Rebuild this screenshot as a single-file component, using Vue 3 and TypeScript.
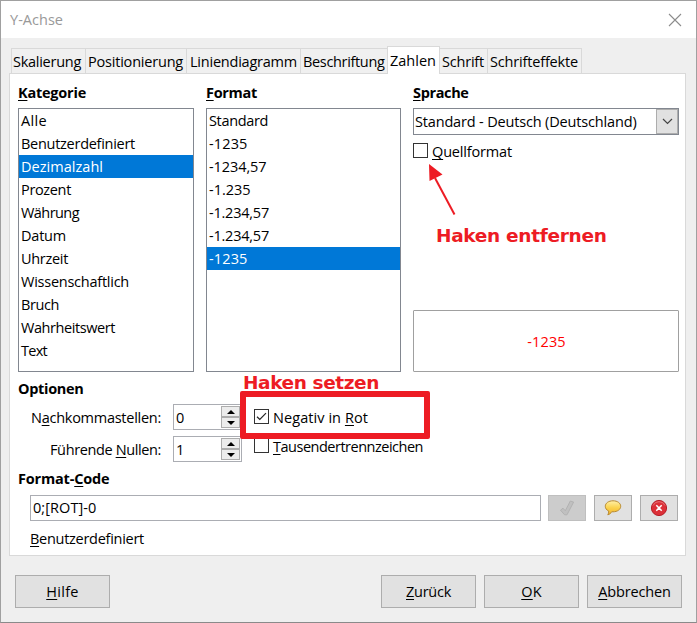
<script setup lang="ts">
import { defineComponent, h, onMounted, ref } from 'vue'

/* Text label: "~" marks the mnemonic letter, w is the label's width in pixels */
const Lbl = defineComponent({
  props: { t: { type: String, required: true }, w: { type: Number, required: true } },
  setup(props) {
    const el = ref<HTMLElement | null>(null)
    const spacing = ref(0)
    onMounted(() => {
      if (!el.value) return
      const natural = el.value.getBoundingClientRect().width
      spacing.value = (props.w - natural) / props.t.replace('~', '').length
    })
    return () => {
      const i = props.t.indexOf('~')
      const parts = i < 0
        ? [props.t]
        : [props.t.slice(0, i), h('u', props.t[i + 1]), props.t.slice(i + 2)]
      return h('span', { ref: el, class: 'lbl', style: { letterSpacing: spacing.value + 'px' } }, parts)
    }
  },
})

interface Item { t: string; w: number }

const tabs = [
  { t: 'Skalierung', w: 68, cls: 't1' },
  { t: 'Positionierung', w: 95, cls: 't2' },
  { t: 'Liniendiagramm', w: 107, cls: 't3' },
  { t: 'Beschriftung', w: 81.5, cls: 't4' },
  { t: 'Zahlen', w: 46, cls: 't5 active' },
  { t: 'Schrift', w: 42, cls: 't6' },
  { t: 'Schrifteffekte', w: 88, cls: 't7' },
]
const categories: Item[] = [
  { t: 'Alle', w: 26 }, { t: 'Benutzerdefiniert', w: 114 }, { t: 'Dezimalzahl', w: 82 },
  { t: 'Prozent', w: 50 }, { t: 'Währung', w: 58 }, { t: 'Datum', w: 45 }, { t: 'Uhrzeit', w: 47 },
  { t: 'Wissenschaftlich', w: 108 }, { t: 'Bruch', w: 38 }, { t: 'Wahrheitswert', w: 94 }, { t: 'Text', w: 26 },
]
const formats: Item[] = [
  { t: 'Standard', w: 59 }, { t: '-1235', w: 38.5 }, { t: '-1234,57', w: 57.5 }, { t: '-1.235', w: 41.5 },
  { t: '-1.234,57', w: 60 }, { t: '-1.234,57', w: 60 }, { t: '-1235', w: 38.5 },
]
const category = ref(2)
const format = ref(6)
const spins = [
  { t: 'N~achkommastellen:', w: 130, v: '0' },
  { t: 'Führende ~Nullen:', w: 111, v: '1' },
]
</script>

<template>
  <div class="window">
    <header class="titlebar">
      <Lbl t="Y-Achse" :w="53" />
      <svg class="close" width="14" height="14" viewBox="0 0 14 14"><path d="M1 1L13 13M13 1L1 13" /></svg>
    </header>

    <nav class="tabs">
      <div v-for="tab in tabs" :key="tab.t" class="tab" :class="tab.cls"><Lbl :t="tab.t" :w="tab.w" /></div>
    </nav>

    <main class="pane">
      <section class="columns">
        <div class="col">
          <h2><Lbl t="~Kategorie" :w="68" /></h2>
          <ul class="list">
            <li v-for="(c, i) in categories" :key="i" :class="{ sel: i === category }" @click="category = i"><Lbl :t="c.t" :w="c.w" /></li>
          </ul>
        </div>
        <div class="col">
          <h2><Lbl t="~Format" :w="51" /></h2>
          <ul class="list">
            <li v-for="(f, i) in formats" :key="i" :class="{ sel: i === format }" @click="format = i"><Lbl :t="f.t" :w="f.w" /></li>
          </ul>
        </div>
        <div class="col">
          <h2><Lbl t="~Sprache" :w="55.5" /></h2>
          <div class="combo">
            <Lbl t="Standard - Deutsch (Deutschland)" :w="221.5" />
            <span class="drop"><svg width="11" height="7" viewBox="0 0 11 7"><path d="M1 1L5.5 5.5L10 1" /></svg></span>
          </div>
          <div class="check source"><i class="box"></i><Lbl class="cap" t="~Quellformat" :w="80" /></div>
          <div class="preview"><Lbl t="-1235" :w="38.5" /></div>
        </div>
      </section>

      <h2 class="opt"><Lbl t="Optionen" :w="65.5" /></h2>
      <section class="options">
        <div class="spins">
          <div v-for="s in spins" :key="s.t" class="spinrow">
            <Lbl class="cap" :t="s.t" :w="s.w" />
            <div class="spin">
              <span class="cap">{{ s.v }}</span>
              <div class="arrows">
                <b><svg width="8" height="4" viewBox="0 0 8 4"><path d="M0 4L4 0L8 4Z" /></svg></b>
                <b><svg width="8" height="4" viewBox="0 0 8 4"><path d="M0 0L4 4L8 0Z" /></svg></b>
              </div>
            </div>
          </div>
        </div>
        <div class="checks">
          <div class="check">
            <i class="box"><svg width="13" height="13" viewBox="0 0 13 13"><path d="M2 6.8L4.8 9.5L11 3.2" /></svg></i>
            <Lbl class="cap" t="Negativ in ~Rot" :w="95" />
          </div>
          <div class="check"><i class="box"></i><Lbl class="cap" t="~Tausendertrennzeichen" :w="150" /></div>
        </div>
      </section>

      <h2 class="code"><Lbl t="Format-~Code" :w="91.5" /></h2>
      <section class="coderow">
        <div class="field"><Lbl t="0;[ROT]-0" :w="63.5" /></div>
        <div class="tool off">
          <svg width="18" height="18" viewBox="0 0 18 18"><path d="M2.5 11.2L5 9.2L7.3 11.8L12.3 2L15.6 3.1L9 15.8H6.6Z" fill="#c0c0c0" stroke="#b2b2b2" stroke-linejoin="round" /></svg>
        </div>
        <div class="tool">
          <svg width="18" height="18" viewBox="0 0 18 18">
            <defs><linearGradient id="bubble" x1="0" y1="0" x2="0" y2="1"><stop offset="0" stop-color="#fff0a8" /><stop offset=".5" stop-color="#fbd24d" /><stop offset="1" stop-color="#f2b32b" /></linearGradient></defs>
            <path d="M9 1.8C13.5 1.8 16.7 4.2 16.7 7.3S13.5 12.8 9 12.8L7.8 12.7C6.8 14.3 5.4 15.4 3.8 15.8C4.5 14.8 4.8 13.5 4.7 12C2.5 11 1.3 9.3 1.3 7.3C1.3 4.2 4.5 1.8 9 1.8Z" fill="url(#bubble)" stroke="#b88a32" />
          </svg>
        </div>
        <div class="tool">
          <svg width="18" height="18" viewBox="0 0 18 18">
            <circle cx="9" cy="9" r="7.6" fill="#dc3038" stroke="#b51e28" />
            <path d="M3 6.5A6.6 6.6 0 0 1 15 6.5" fill="none" stroke="#ec7d80" stroke-width=".8" />
            <path d="M6.3 6.3L11.7 11.7M11.7 6.3L6.3 11.7" stroke="#fff" stroke-width="1.5" />
          </svg>
        </div>
      </section>
      <div class="custom"><Lbl t="~Benutzerdefiniert" :w="114" /></div>
    </main>

    <footer class="footer">
      <button class="help"><Lbl t="~Hilfe" :w="32.5" /></button>
      <button><Lbl t="~Zurück" :w="45" /></button>
      <button><Lbl t="~OK" :w="20.5" /></button>
      <button><Lbl t="~Abbrechen" :w="72.5" /></button>
    </footer>

    <i class="edge"></i>
    <div class="note remove"><Lbl t="Haken entfernen" :w="170.5" /></div>
    <div class="note set"><Lbl t="Haken setzen" :w="136" /></div>
    <div class="frame"></div>
    <svg class="pointer" width="32" height="56" viewBox="0 0 32 56">
      <path d="M10 15L29.5 51.5" stroke="#ed1c24" stroke-width="2" />
      <path d="M4 1L17.5 11.5L4.5 18Z" fill="#ed1c24" />
    </svg>
  </div>
</template>

<style>
body { margin: 0; background: #efefef; }
.lbl { display: inline-block; white-space: pre; flex: none; }
.lbl u { text-decoration: underline; text-decoration-thickness: 1px; text-underline-offset: 2px; text-decoration-skip-ink: none; }
</style>

<style scoped>
* { box-sizing: border-box; }
.window {
  position: relative; width: 697px; height: 623px; overflow: hidden;
  display: flex; flex-direction: column; background: #efefef;
  border: 1px solid #a0a0a0; border-bottom-color: #8a8a8a;
  font: 14.5px/20px "Open Sans", "Noto Sans", sans-serif; color: #000;
}
.titlebar { height: 37px; flex: none; background: #fff; color: #999; display: flex; align-items: center; justify-content: space-between; padding: 0 14px 0 9px; }
.close { stroke: #8c8c8c; stroke-width: 1.1; fill: none; }
.tabs { height: 35px; flex: none; display: flex; align-items: flex-end; padding-left: 10px; }
.tab { height: 25px; border: 1px solid #d9d9d9; border-width: 1px 0 0 1px; padding: 3px 0 0 2px; background: #f0f0f0; }
.t1 { width: 74px; padding-left: 1px; }
.t2 { width: 101px; }
.t3 { width: 114px; padding-left: 3px; }
.t4 { width: 87px; }
.active { width: 53px; height: 28px; margin-bottom: -1px; background: #fff; border-right-width: 1px; padding: 4px 0 0 2px; position: relative; z-index: 1; }
.t6 { width: 47px; border-left: 0; }
.t7 { width: 95px; border-right-width: 1px; }
.pane { width: 677px; height: 483px; flex: none; margin-left: 8px; background: #fff; border: 1px solid #d9d9d9; padding: 9px 0 0 8px; }
h2 { margin: 0; font-size: 14.5px; line-height: 20px; height: 20px; font-weight: 700; }
.columns { display: grid; grid-template-columns: 176px 195px 266px; column-gap: 12px; }
.col { height: 289px; display: flex; flex-direction: column; }
.list { list-style: none; margin: 5px 0 0; padding: 0; height: 264px; border: 1px solid #828790; }
.list li { height: 23px; line-height: 23px; padding-left: 2px; }
.list .sel { background: #0078d7; color: #fff; }
.combo { margin-top: 5px; height: 27px; flex: none; border: 1px solid #828790; display: flex; justify-content: space-between; align-items: center; padding-left: 1px; }
.drop { width: 22px; height: 25px; background: #e1e1e1; border: 1px solid #adadad; display: grid; place-items: center; }
.drop path { fill: none; stroke: #444; stroke-width: 1.2; }
.check { display: flex; gap: 4px; height: 15px; align-items: center; }
.cap { padding-top: 2px; }
.box { width: 15px; height: 15px; flex: none; border: 1px solid #333; background: #fff; display: block; }
.box svg { display: block; }
.box path { fill: none; stroke: #222; stroke-width: 1.2; }
.source { margin-top: 8px; }
.preview { margin-top: auto; height: 62px; border: 1px solid #a0a0a0; border-radius: 1px; color: #f00; display: grid; place-items: center; padding: 2px 0 0 1px; }
.opt { margin-top: 7px; }
.options { display: flex; gap: 12px; margin-top: 5px; }
.spins { width: 224px; display: flex; flex-direction: column; gap: 6px; }
.spinrow { display: flex; justify-content: flex-end; align-items: center; gap: 12px; height: 26px; }
.spin { width: 69px; height: 26px; border: 1px solid #abadb3; display: flex; justify-content: space-between; align-items: center; padding: 0 1px 0 2px; }
.arrows { display: flex; flex-direction: column; width: 19px; }
.arrows b { height: 11px; border: 1px solid #adadad; background: #ececec; display: grid; place-items: center; }
.arrows svg { display: block; }
.checks { padding-top: 5px; display: flex; flex-direction: column; gap: 14px; }
.code { margin-top: 7px; }
.coderow { display: flex; gap: 8px; margin: 6px 0 0 12px; }
.field { width: 511px; margin-right: -1px; height: 26px; border: 1px solid #abadb3; padding: 2px 0 0 2px; }
.tool { width: 38px; height: 26px; border: 1px solid #adadad; background: #e1e1e1; display: grid; place-items: center; }
.off { background: #ccc; border-color: #bfbfbf; }
.custom { margin: 8px 0 0 12px; }
.footer { display: flex; gap: 8px; padding: 19px 0 0 14px; }
button { width: 95px; height: 33px; padding: 0; border: 1px solid #adadad; background: #e1e1e1; font: inherit; color: inherit; }
.help { margin-right: 263px; }
.note { position: absolute; font: 700 18.5px/24px "DejaVu Sans", sans-serif; color: #ed1c24; }
.remove { left: 435px; top: 223px; }
.set { left: 242px; top: 370px; }
.frame { position: absolute; left: 239px; top: 390px; width: 190px; height: 48px; border: 6px solid #ed1c24; border-radius: 2px; }
.pointer { position: absolute; left: 424px; top: 162px; }
.edge { position: absolute; left: -1px; top: 212px; width: 1px; height: 24px; background: #c2492b; }
</style>
